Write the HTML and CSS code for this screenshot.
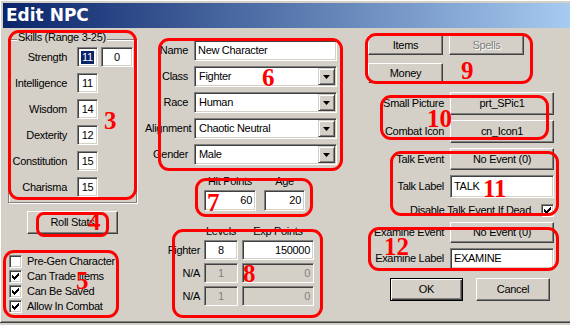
FILE: index.html
```html
<!DOCTYPE html>
<html lang="en">
<head>
    <meta charset="UTF-8">
    <title>Edit NPC</title>
    <link rel="stylesheet" href="styles.css">
</head>
<body>

<div class="window">
    <div class="titlebar">Edit NPC</div>

    <div class="main">
        <!-- skills, roll button, flags -->
        <div class="col-left">
            <div class="group">
                <div class="group-title">Skills (Range 3-25)</div>
                <div class="skill"><span class="lbl">Strength</span><span class="field score"><span class="sel">11</span></span><span class="field extra">0</span></div>
                <div class="skill"><span class="lbl">Intelligence</span><span class="field score">11</span></div>
                <div class="skill"><span class="lbl">Wisdom</span><span class="field score">14</span></div>
                <div class="skill"><span class="lbl">Dexterity</span><span class="field score">12</span></div>
                <div class="skill"><span class="lbl">Constitution</span><span class="field score">15</span></div>
                <div class="skill"><span class="lbl">Charisma</span><span class="field score">15</span></div>
            </div>
            <button class="btn roll">Roll Stats</button>
            <ul class="checks">
                <li><span class="check"></span>Pre-Gen Character</li>
                <li><span class="check on"><svg width="7" height="7" viewBox="0 0 7 7"><path d="M0 2h1v1h1v1h1V3h1V2h1V1h1V0h1v3H6v1H5v1H4v1H3v1H2V6H1V5H0z"/></svg></span>Can Trade Items</li>
                <li><span class="check on"><svg width="7" height="7" viewBox="0 0 7 7"><path d="M0 2h1v1h1v1h1V3h1V2h1V1h1V0h1v3H6v1H5v1H4v1H3v1H2V6H1V5H0z"/></svg></span>Can Be Saved</li>
                <li><span class="check on"><svg width="7" height="7" viewBox="0 0 7 7"><path d="M0 2h1v1h1v1h1V3h1V2h1V1h1V0h1v3H6v1H5v1H4v1H3v1H2V6H1V5H0z"/></svg></span>Allow In Combat</li>
            </ul>
        </div>

        <!-- identity, hp, levels -->
        <div class="col-mid">
            <div class="form">
                <span class="lbl">Name</span>
                <span class="field">New Character</span>
                <span class="lbl">Class</span>
                <span class="field select"><span class="val">Fighter</span><span class="drop"><svg width="7" height="4" viewBox="0 0 7 4"><path d="M0 0h7L3.5 4z"/></svg></span></span>
                <span class="lbl">Race</span>
                <span class="field select"><span class="val">Human</span><span class="drop"><svg width="7" height="4" viewBox="0 0 7 4"><path d="M0 0h7L3.5 4z"/></svg></span></span>
                <span class="lbl">Alignment</span>
                <span class="field select"><span class="val">Chaotic Neutral</span><span class="drop"><svg width="7" height="4" viewBox="0 0 7 4"><path d="M0 0h7L3.5 4z"/></svg></span></span>
                <span class="lbl">Gender</span>
                <span class="field select"><span class="val">Male</span><span class="drop"><svg width="7" height="4" viewBox="0 0 7 4"><path d="M0 0h7L3.5 4z"/></svg></span></span>
            </div>

            <div class="stats">
                <span class="head">Hit Points</span>
                <span class="head">Age</span>
                <span class="field right">60</span>
                <span class="field right">20</span>
            </div>

            <div class="levels">
                <span></span>
                <span class="head">Levels</span>
                <span class="head">Exp Points</span>
                <span class="lbl">Fighter</span>
                <span class="field center">8</span>
                <span class="field right">150000</span>
                <span class="lbl">N/A</span>
                <span class="field center disabled">1</span>
                <span class="field right disabled">0</span>
                <span class="lbl">N/A</span>
                <span class="field center disabled">1</span>
                <span class="field right disabled">0</span>
            </div>
        </div>

        <!-- inventory, pictures, events -->
        <div class="col-right">
            <div class="top-buttons">
                <button class="btn">Items</button>
                <button class="btn" disabled>Spells</button>
                <button class="btn">Money</button>
            </div>

            <div class="props">
                <span class="lbl">Small Picture</span>
                <button class="btn">prt_SPic1</button>
                <span class="lbl">Combat Icon</span>
                <button class="btn">cn_Icon1</button>
                <span class="lbl">Talk Event</span>
                <button class="btn">No Event (0)</button>
                <span class="lbl">Talk Label</span>
                <span class="field">TALK</span>
                <div class="dead-row">Disable Talk Event If Dead <span class="check on"><svg width="7" height="7" viewBox="0 0 7 7"><path d="M0 2h1v1h1v1h1V3h1V2h1V1h1V0h1v3H6v1H5v1H4v1H3v1H2V6H1V5H0z"/></svg></span></div>
                <span class="lbl">Examine Event</span>
                <button class="btn">No Event (0)</button>
                <span class="lbl">Examine Label</span>
                <span class="field">EXAMINE</span>
            </div>

            <div class="actions">
                <button class="btn default ok">OK</button>
                <button class="btn cancel">Cancel</button>
            </div>
        </div>
    </div>

    <!-- red annotation marks drawn over the dialog -->
    <div class="mark mark-3"></div><span class="note note-3">3</span>
    <div class="mark mark-4"></div><span class="note note-4">4</span>
    <div class="mark mark-5"></div><span class="note note-5">5</span>
    <div class="mark mark-6"></div><span class="note note-6">6</span>
    <div class="mark mark-7"></div><span class="note note-7">7</span>
    <div class="mark mark-8"></div><span class="note note-8">8</span>
    <div class="mark mark-9"></div><span class="note note-9">9</span>
    <div class="mark mark-10"></div><span class="note note-10">10</span>
    <div class="mark mark-11"></div><span class="note note-11">11</span>
    <div class="mark mark-12"></div><span class="note note-12">12</span>
</div>

</body>
</html>
```

FILE: styles.css
```css
body {
    margin: 0;
    background-color: #d4d0c8;
    font-family: "Liberation Sans", Arial, sans-serif;
    font-size: 11px;
    line-height: 13px;
    letter-spacing: -0.3px;
    color: #000;
}
.window {
    position: relative;
    width: 570px;
    height: 322px;
    border-bottom: 1px solid #404040;
    box-shadow: inset 1px 1px 0 #fff, inset 0 -1px 0 #808080;
    overflow: hidden;
}
.titlebar {
    margin: 3px 0 0 3px;
    height: 25px;
    padding-left: 3px;
    background: linear-gradient(to right, #0a246a, #a6caf0);
    color: #fff;
    font-family: "DejaVu Sans", sans-serif;
    font-weight: bold;
    font-size: 17px;
    line-height: 25px;
    letter-spacing: 0;
}
.main {
    display: flex;
    align-items: flex-start;
}

/* shared win95 bits */
.field {
    box-sizing: border-box;
    display: flex;
    align-items: center;
    height: 21px;
    padding: 0 3px;
    background-color: #fff;
    border: 1px solid;
    border-color: #808080 #fff #fff #808080;
    box-shadow: inset 1px 1px 0 #404040, inset -1px -1px 0 #d4d0c8;
    white-space: nowrap;
}
.field.center { justify-content: center; }
.field.right { justify-content: flex-end; }
.field.disabled {
    background-color: #d4d0c8;
    color: #808080;
}
.btn {
    box-sizing: border-box;
    height: 20px;
    padding: 0;
    font: inherit;
    letter-spacing: inherit;
    color: #000;
    background-color: #d4d0c8;
    border: 1px solid;
    border-color: #fff #404040 #404040 #fff;
    box-shadow: inset -1px -1px 0 #808080;
    text-align: center;
}
.btn:disabled {
    color: #808080;
    text-shadow: 1px 1px 0 #fff;
}
.btn.default {
    border-color: #000;
    box-shadow: inset 1px 1px 0 #fff, inset -1px -1px 0 #404040, inset -2px -2px 0 #808080;
}
.check {
    box-sizing: border-box;
    display: inline-flex;
    align-items: center;
    justify-content: center;
    width: 13px;
    height: 13px;
    background-color: #fff;
    border: 1px solid;
    border-color: #808080 #fff #fff #808080;
    box-shadow: inset 1px 1px 0 #404040, inset -1px -1px 0 #d4d0c8;
}
.check svg { display: block; }
.lbl {
    text-align: right;
    white-space: nowrap;
}

/* left column */
.col-left {
    margin-left: 8px;
    width: 129px;
}
.group {
    margin-top: 11px;
    padding-bottom: 5px;
    border: 1px solid #808080;
    box-shadow: inset 1px 1px 0 #fff, 1px 1px 0 #fff;
}
.group-title {
    width: fit-content;
    margin: -9px 0 3px 8px;
    padding: 0 1px;
    background-color: #d4d0c8;
}
.skill {
    display: flex;
    align-items: center;
    height: 20px;
    margin-bottom: 6px;
}
.skill:last-child { margin-bottom: 0; }
.skill .lbl {
    width: 58px;
    margin-right: 10px;
}
.skill .field {
    height: 20px;
    justify-content: center;
}
.skill .score { width: 21px; }
.skill .extra {
    width: 32px;
    margin-left: 3px;
}
.sel {
    background-color: #0a246a;
    color: #fff;
    padding: 0 1px;
    line-height: 13px;
}
.roll {
    display: block;
    width: 91px;
    height: 23px;
    margin: 8px 0 0 19px;
}
.checks {
    list-style: none;
    margin: 20px 0 0 1px;
    padding: 0;
}
.checks li {
    display: flex;
    align-items: center;
    height: 15px;
    white-space: nowrap;
}
.checks .check { margin-right: 5px; }

/* middle column */
.col-mid {
    margin: 12px 0 0 8px;
    width: 195px;
}
.form {
    display: grid;
    grid-template-columns: 43px 143px;
    grid-auto-rows: 21px;
    column-gap: 6px;
    row-gap: 5px;
    align-items: center;
}
.select { padding: 1px 1px 1px 4px; }
.select .val { flex: 1; }
.drop {
    box-sizing: border-box;
    align-self: stretch;
    display: flex;
    align-items: center;
    justify-content: center;
    width: 17px;
    background-color: #d4d0c8;
    border: 1px solid;
    border-color: #d4d0c8 #404040 #404040 #d4d0c8;
    box-shadow: inset 1px 1px 0 #fff, inset -1px -1px 0 #808080;
}
.stats {
    display: grid;
    grid-template-columns: 52px 41px;
    grid-template-rows: 13px 21px;
    column-gap: 8px;
    row-gap: 2px;
    margin-top: 10px;
    padding-left: 59px;
}
.head {
    text-align: center;
    white-space: nowrap;
}
.levels {
    display: grid;
    grid-template-columns: 55px 34px 72px;
    grid-template-rows: 12px 20px 20px 20px;
    column-gap: 4px;
    row-gap: 3px;
    margin-top: 14px;
    align-items: center;
}
.levels .field { height: 20px; }

/* right column */
.col-right {
    margin: 7px 0 0 28px;
    width: 188px;
}
.top-buttons {
    display: grid;
    grid-template-columns: 75px 75px;
    grid-auto-rows: 20px;
    column-gap: 6px;
    row-gap: 8px;
}
.props {
    display: grid;
    grid-template-columns: 76px 104px;
    grid-template-rows: 23px 23px 22px 23px 14px 21px 21px;
    column-gap: 6px;
    row-gap: 5px;
    margin-top: 9px;
    align-items: center;
}
.props .btn,
.props .field {
    height: 100%;
}
.dead-row {
    grid-column: 1 / 3;
    display: flex;
    align-items: center;
    justify-content: flex-end;
    white-space: nowrap;
}
.dead-row .check { margin: 0 0 0 10px; }
.actions {
    display: flex;
    gap: 13px;
    margin-top: 9px;
    padding-left: 22px;
}
.ok { width: 73px; height: 23px; }
.cancel { width: 74px; height: 23px; }

/* red annotation overlay */
.mark {
    position: absolute;
    box-sizing: border-box;
    border: 3px solid #f00;
    border-radius: 11px;
}
.note {
    position: absolute;
    color: #f00;
    font-family: "Liberation Serif", "Times New Roman", serif;
    font-weight: bold;
    font-size: 25px;
    line-height: 25px;
    letter-spacing: 0;
}
.mark-3 { left: 8px; top: 30px; width: 129px; height: 170px; }
.mark-4 { left: 36px; top: 212px; width: 73px; height: 25px; border-radius: 8px; }
.mark-5 { left: 3px; top: 250px; width: 116px; height: 68px; }
.mark-6 { left: 158px; top: 38px; width: 185px; height: 133px; }
.mark-7 { left: 195px; top: 178px; width: 118px; height: 39px; }
.mark-8 { left: 172px; top: 229px; width: 151px; height: 89px; }
.mark-9 { left: 365px; top: 33px; width: 168px; height: 51px; }
.mark-10 { left: 380px; top: 95px; width: 169px; height: 45px; }
.mark-11 { left: 390px; top: 151px; width: 169px; height: 65px; }
.mark-12 { left: 368px; top: 227px; width: 191px; height: 44px; }
.note-3 { left: 104px; top: 108px; }
.note-4 { left: 88px; top: 209px; }
.note-5 { left: 76px; top: 268px; }
.note-6 { left: 262px; top: 65px; }
.note-7 { left: 207px; top: 190px; }
.note-8 { left: 243px; top: 261px; }
.note-9 { left: 461px; top: 58px; }
.note-10 { left: 427px; top: 106px; }
.note-11 { left: 483px; top: 176px; }
.note-12 { left: 384px; top: 234px; }
```
